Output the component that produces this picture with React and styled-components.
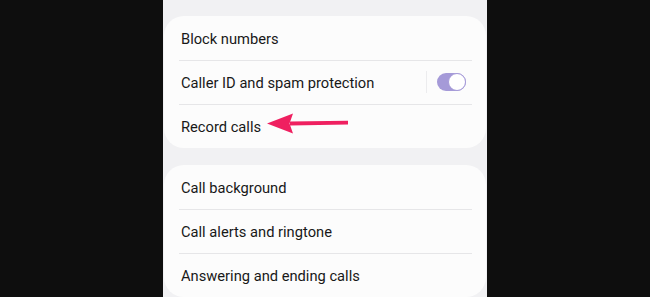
import React from "react";
import styled, { createGlobalStyle } from "styled-components";

const Global = createGlobalStyle`
  html, body { margin: 0; padding: 0; background: #0e0e0e; }
  body { font-family: Roboto, "Noto Sans", Arial, sans-serif; }
`;

const Stage = styled.div`
  width: 650px;
  height: 297px;
  display: flex;
  justify-content: center;
  background: #0e0e0e;
  overflow: hidden;
`;

const Screen = styled.div`
  width: 324px;
  background: #f1f1f3;
  display: flex;
  flex-direction: column;
  gap: 17px;
  padding: 16px 1px 0 1px;
  box-sizing: border-box;
`;

const Card = styled.div`
  background: #fcfcfc;
  border-radius: 20px;
  display: flex;
  flex-direction: column;
  flex-shrink: 0;
`;

const Row = styled.div`
  position: relative;
  height: 44px;
  box-sizing: border-box;
  display: flex;
  align-items: center;
  padding: 2px 20px 0 17px;
  font-size: 14.7px;
  color: #181818;
  & + &::before {
    content: "";
    position: absolute;
    top: -0.5px;
    left: 15px;
    right: 14px;
    height: 1px;
    background: #e6e6e8;
  }
`;

const Label = styled.span`
  flex: 1;
`;

const Sep = styled.div`
  width: 1px;
  height: 22px;
  background: #ececee;
  margin: -2px 10px 0 0;
`;

const Toggle = styled.div`
  width: 29px;
  height: 18px;
  margin-top: -2px;
  border-radius: 9px;
  background: #a59ad8;
  position: relative;
  &::after {
    content: "";
    position: absolute;
    right: 0;
    top: 0;
    width: 16px;
    height: 16px;
    border-radius: 50%;
    background: #fff;
    border: 1px solid #a59ad8;
  }
`;

const Arrow = styled.svg`
  position: absolute;
  left: 102px;
  top: 6px;
`;

export default function App() {
  return (
    <Stage>
      <Global />
      <Screen>
        <Card>
          <Row><Label>Block numbers</Label></Row>
          <Row>
            <Label>Caller ID and spam protection</Label>
            <Sep />
            <Toggle />
          </Row>
          <Row>
            <Label>Record calls</Label>
            <Arrow width="86" height="26" viewBox="0 0 86 26">
              <path d="M24 11.5 L82 10.8 L82 14.6 L24 15.5 Z" fill="#ef2060" />
              <path d="M1 13.5 L27 3.5 L23.5 13.5 L27 23.5 Z" fill="#ef2060" />
            </Arrow>
          </Row>
        </Card>
        <Card>
          <Row><Label>Call background</Label></Row>
          <Row><Label>Call alerts and ringtone</Label></Row>
          <Row><Label>Answering and ending calls</Label></Row>
        </Card>
      </Screen>
    </Stage>
  );
}
